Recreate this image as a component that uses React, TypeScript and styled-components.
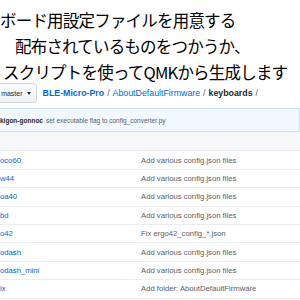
import { FC } from 'react';
import styled, { createGlobalStyle } from 'styled-components';

const files = [
  { name: 'oco60', message: 'Add various config.json files' },
  { name: 'w44', message: 'Add various config.json files' },
  { name: 'oa40', message: 'Add various config.json files' },
  { name: 'bd', message: 'Add various config.json files' },
  { name: 'o42', message: 'Fix ergo42_config_*.json' },
  { name: 'odash', message: 'Add various config.json files' },
  { name: 'odash_mini', message: 'Add various config.json files' },
  { name: 'ix', message: 'Add folder: AboutDefaultFirmware' },
];

const titleLines = [
  { text: 'ボード用設定ファイルを用意する', indent: 0 },
  { text: '配布されているものをつかうか、', indent: 15 },
  { text: 'スクリプトを使ってQMKから生成します', indent: 3 },
];

const App: FC = () => {
  return (
    <Page>
      <GlobalStyle />
      <Title>
        {titleLines.map((line) => (
          <TitleLine key={line.text} $indent={line.indent}>
            {line.text}
          </TitleLine>
        ))}
      </Title>

      <Repo>
        <Toolbar>
          <BranchButton>
            Branch: <b>master</b>
            <Caret />
          </BranchButton>
          <Breadcrumb>
            <a className="root">BLE-Micro-Pro</a>
            <span className="sep">/</span>
            <a>AboutDefaultFirmware</a>
            <span className="sep">/</span>
            <strong>keyboards</strong>
            <span className="sep">/</span>
          </Breadcrumb>
        </Toolbar>

        <CommitBar>
          <strong>kigon-gonnoc</strong>
          <span>set executable flag to config_converter.py</span>
        </CommitBar>

        <FileTable>
          <UpRow />
          {files.map((file, i) => (
            <FileRow key={i}>
              <FileName>{file.name}</FileName>
              <Message>{file.message}</Message>
            </FileRow>
          ))}
        </FileTable>
      </Repo>
    </Page>
  );
};

// styles
const GlobalStyle = createGlobalStyle`
  html, body {
    margin: 0;
    padding: 0;
    background: #fff;
    overflow: hidden;
  }
`;

const Page = styled.div`
  width: 300px;
  height: 300px;
  overflow: hidden;
  background: #fff;
`;

const Title = styled.div`
  box-sizing: border-box;
  height: 83px;
  padding-top: 7px;
  font-family: 'Noto Sans CJK JP', sans-serif;
  font-size: 16.5px;
  letter-spacing: -0.8px;
  line-height: 26px;
  color: #000;
  white-space: nowrap;
`;

const TitleLine = styled.div<{ $indent: number }>`
  padding-left: ${({ $indent }) => $indent}px;
`;

const Repo = styled.div`
  font-family: 'Liberation Sans', Arial, sans-serif;
`;

const Toolbar = styled.div`
  display: flex;
  align-items: center;
  gap: 6px;
  height: 20px;
`;

const BranchButton = styled.span`
  display: flex;
  align-items: center;
  gap: 2px;
  box-sizing: border-box;
  height: 20px;
  margin-left: -31px;
  padding: 0 5px;
  border: 1px solid #d1d5da;
  border-radius: 3px;
  background: linear-gradient(#fafbfc, #eff3f6);
  font-size: 7px;
  color: #586069;
  white-space: nowrap;
  b {
    font-weight: normal;
    color: #24292e;
  }
`;

const Caret = styled.span`
  margin-left: 2px;
  border-top: 3px solid #24292e;
  border-left: 2.5px solid transparent;
  border-right: 2.5px solid transparent;
`;

const Breadcrumb = styled.div`
  display: flex;
  align-items: center;
  gap: 3px;
  font-size: 8.8px;
  white-space: nowrap;
  a {
    color: #0366d6;
  }
  .root {
    font-weight: bold;
  }
  .sep {
    color: #586069;
  }
  strong {
    color: #24292e;
  }
`;

const CommitBar = styled.div`
  display: flex;
  align-items: center;
  gap: 3px;
  box-sizing: border-box;
  height: 24px;
  margin-top: 5px;
  border: 1px solid #c8e1ff;
  border-left: none;
  background: #f1f8ff;
  font-size: 6.5px;
  color: #586069;
  white-space: nowrap;
  strong {
    color: #24292e;
  }
`;

const FileTable = styled.div`
  border-bottom: 1px solid #eaecef;
  font-size: 7.7px;
`;

const UpRow = styled.div`
  height: 18.4px;
  background: #f6f8fa;
`;

const FileRow = styled.div`
  display: grid;
  grid-template-columns: 141px 1fr;
  align-items: center;
  box-sizing: border-box;
  height: 18.4px;
  border-top: 1px solid #eaecef;
  white-space: nowrap;
`;

const FileName = styled.span`
  color: #0366d6;
`;

const Message = styled.span`
  color: #586069;
`;

export default App;
